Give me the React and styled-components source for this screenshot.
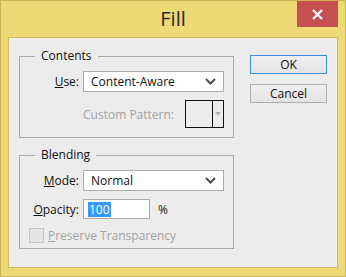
import React from "react"
import styled, { createGlobalStyle } from "styled-components"

const Global = createGlobalStyle`
  html, body {
    margin: 0;
    padding: 0;
    background: #edd975;
  }
  * { box-sizing: border-box; }
`

const Window = styled.div`
  width: 346px;
  height: 277px;
  background: #edd975;
  border: 1px solid #c9b25a;
  padding: 0 7px 8px 7px;
  display: flex;
  flex-direction: column;
  font-family: "Open Sans", "Noto Sans", sans-serif;
  font-size: 12px;
  color: #1a1a1a;
`

const TitleBar = styled.div`
  height: 36px;
  margin: 0 -7px;
  display: grid;
  grid-template-columns: 1fr auto 1fr;
  align-items: start;
`

const Title = styled.div`
  grid-column: 2;
  font-size: 20px;
  line-height: 24px;
  margin-top: 6px;
  color: #2a2a2a;
`

const Close = styled.div`
  grid-column: 3;
  justify-self: end;
  width: 41px;
  height: 26px;
  margin-right: 7px;
  background: #c75050;
  display: flex;
  align-items: center;
  justify-content: center;
`

const Panel = styled.div`
  flex: 1;
  background: #ececec;
  border: 1px solid #d3bb62;
  padding: 18px 0 0 10px;
  display: flex;
  gap: 16px;
`

const Groups = styled.div`
  display: flex;
  flex-direction: column;
  gap: 17px;
`

const Group = styled.div`
  position: relative;
  width: 215px;
  height: ${(p) => p.$h}px;
  border: 1px solid #a9a9a9;
  padding-top: 14px;
  display: flex;
  flex-direction: column;
  gap: ${(p) => p.$gap}px;
`

const Legend = styled.div`
  position: absolute;
  top: -9px;
  left: 15px;
  padding: 0 6px;
  line-height: 16px;
  font-size: 12px;
  background: #ececec;
  color: #111;
`

const Row = styled.div`
  display: flex;
  align-items: center;
  justify-content: ${(p) => (p.$end ? "flex-end" : "flex-start")};
  padding-right: ${(p) => (p.$end ? 9 : 0)}px;
  padding-left: ${(p) => p.$indent || 0}px;
`

const Label = styled.label`
  width: ${(p) => (p.$w ? p.$w + "px" : "auto")};
  text-align: right;
  margin-right: ${(p) => p.$gap}px;
  font-size: 12px;
  color: ${(p) => (p.$disabled ? "#a3a3a3" : "#111")};
  white-space: nowrap;
`

const Select = styled.div`
  width: 141px;
  height: 21px;
  background: #fff;
  border: 1px solid #acacac;
  display: flex;
  align-items: center;
  justify-content: space-between;
  padding: 0 7px 0 7px;
  font-size: 12px;
  color: #111;
`

const PatternBox = styled.div`
  width: 39px;
  height: 28px;
  border: 1px solid #111;
  display: flex;
`

const PatternSwatch = styled.div`
  flex: 1;
  border-right: 1px solid #111;
`

const PatternArrow = styled.div`
  width: 10px;
  display: flex;
  align-items: center;
  justify-content: center;
`

const Input = styled.div`
  width: 67px;
  height: 20px;
  background: #fff;
  border: 1px solid #acacac;
  display: flex;
  align-items: center;
  padding-left: 4px;
  font-size: 12px;
`

const Selected = styled.span`
  background: #3399ff;
  color: #fff;
  line-height: 15px;
  padding: 0 1px;
`

const Unit = styled.span`
  margin-left: 8px;
  font-size: 12px;
`

const Check = styled.div`
  width: 15px;
  height: 15px;
  border: 1px solid #c4c4c4;
  background: #e4e4e4;
  margin-right: 4px;
`

const Buttons = styled.div`
  display: flex;
  flex-direction: column;
  gap: 10px;
  margin-top: -1px;
`

const Button = styled.div`
  width: 77px;
  height: 19px;
  border: 1px solid ${(p) => (p.$default ? "#3c8fe4" : "#adadad")};
  background: linear-gradient(#efefef, #e3e3e3);
  display: flex;
  align-items: center;
  justify-content: center;
  font-size: 12px;
  color: #111;
`

const Chevron = () => (
  <svg width="11" height="7" viewBox="0 0 11 7">
    <path d="M1 1 L5.5 5.5 L10 1" fill="none" stroke="#4d4d4d" strokeWidth="2" />
  </svg>
)

export default function App() {
  return (
    <Window>
      <Global />
      <TitleBar>
        <Title>Fill</Title>
        <Close>
          <svg width="11" height="11" viewBox="0 0 11 11">
            <path d="M1 1 L10 10 M10 1 L1 10" stroke="#fff" strokeWidth="2.3" />
          </svg>
        </Close>
      </TitleBar>
      <Panel>
        <Groups>
          <Group $h={82} $gap={8}>
            <Legend>Contents</Legend>
            <Row>
              <Label $w={59} $gap={4}><u>U</u>se:</Label>
              <Select>
                Content-Aware
                <Chevron />
              </Select>
            </Row>
            <Row $end>
              <Label $disabled $gap={11}>Custom Pattern:</Label>
              <PatternBox>
                <PatternSwatch />
                <PatternArrow>
                  <svg width="6" height="4" viewBox="0 0 6 4">
                    <path d="M0 0 H6 L3 3.5 Z" fill="#b0b0b0" />
                  </svg>
                </PatternArrow>
              </PatternBox>
            </Row>
          </Group>
          <Group $h={94} $gap={8}>
            <Legend>Blending</Legend>
            <Row>
              <Label $w={59} $gap={4}><u>M</u>ode:</Label>
              <Select>
                Normal
                <Chevron />
              </Select>
            </Row>
            <Row>
              <Label $w={59} $gap={4}><u>O</u>pacity:</Label>
              <Input><Selected>100</Selected></Input>
              <Unit>%</Unit>
            </Row>
            <Row $indent={9}>
              <Check />
              <Label $disabled $gap={0}><u>P</u>reserve Transparency</Label>
            </Row>
          </Group>
        </Groups>
        <Buttons>
          <Button $default>OK</Button>
          <Button>Cancel</Button>
        </Buttons>
      </Panel>
    </Window>
  )
}
